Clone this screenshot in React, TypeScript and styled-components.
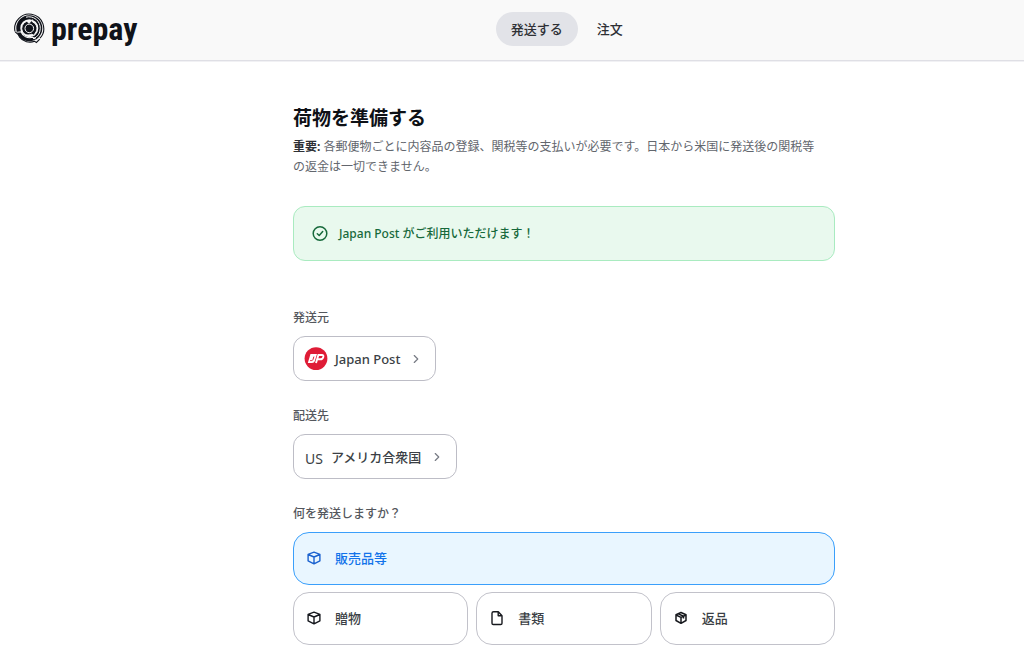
import React, { useState } from "react";
import styled, { createGlobalStyle } from "styled-components";
import { ChevronRight } from "lucide-react";

const GlobalStyle = createGlobalStyle`
  *, *::before, *::after { box-sizing: border-box; }
  body {
    margin: 0;
    background: #ffffff;
    color: #3b3f45;
    font-family: "Noto Sans", "Noto Sans CJK JP", sans-serif;
    font-size: 13px;
    line-height: 20px;
  }
  h1, p { margin: 0; }
`;

const Header = styled.header`
  display: flex;
  align-items: center;
  height: 61px;
  padding: 0 28px 3px 14px;
  background: #f9f9f9;
  border-bottom: 1px solid #dfdfe5;
  box-shadow: 0 1px 0 #f1f1f4;
`;

const Brand = styled.a`
  display: flex;
  align-items: center;
  gap: 6px;
  color: #10131a;
  text-decoration: none;
`;

const BrandName = styled.span`
  font-family: "Roboto Condensed", "Roboto", sans-serif;
  font-size: 32px;
  font-weight: 700;
  line-height: 36px;
`;

const Nav = styled.nav`
  display: flex;
  flex: 1;
  justify-content: center;
  gap: 4px;
`;

const NavLink = styled.a<{ $active?: boolean }>`
  padding: 7px 15px;
  border-radius: 17px;
  background: ${(p) => (p.$active ? "#e2e3e8" : "transparent")};
  color: #2e3035;
  font-weight: 500;
  text-decoration: none;
`;

const Main = styled.main`
  padding: 43px 0 0 104px;
`;

const Content = styled.div`
  width: 100%;
  max-width: 542px;
  margin: 0 auto;
`;

const Title = styled.h1`
  color: #0e1116;
  font-size: 19px;
  font-weight: 700;
  line-height: 28px;
`;

const Description = styled.p`
  margin-top: 5px;
  padding-right: 12px;
  color: #62666d;
  font-size: 12px;

  strong {
    color: #2e3035;
    font-weight: 700;
  }
`;

const Notice = styled.div`
  display: flex;
  align-items: center;
  gap: 10px;
  height: 55px;
  margin-top: 29px;
  padding: 0 17px;
  border: 1px solid #a9ebc0;
  border-radius: 12px;
  background: #e9f9ee;
  color: #17693b;
  font-size: 12px;
  font-weight: 500;
`;

const Fields = styled.div`
  display: flex;
  flex-direction: column;
  gap: 25px;
  margin-top: 47px;
`;

const Field = styled.div`
  display: flex;
  flex-direction: column;
  align-items: flex-start;
  gap: 8px;
`;

const FieldLabel = styled.span`
  color: #54575d;
  font-size: 12px;
  font-weight: 500;
`;

const PickerButton = styled.button`
  display: flex;
  align-items: center;
  gap: 7px;
  height: 45px;
  padding: 0 12px 0 10px;
  border: 1px solid #bdbdc6;
  border-radius: 12px;
  background: #ffffff;
  color: #3b3f45;
  font: inherit;
  font-weight: 500;
  cursor: pointer;

  .lucide {
    margin-left: 2px;
    color: #777b84;
  }
`;

const CountryCode = styled.span`
  padding: 4px 1px 0;
  font-size: 14px;
  font-weight: 400;
`;

const OptionGrid = styled.div`
  display: grid;
  grid-template-columns: repeat(3, 1fr);
  gap: 7px 8px;
  width: 100%;
`;

const OptionCard = styled.label<{ $selected: boolean; $wide?: boolean }>`
  display: flex;
  align-items: center;
  grid-column: ${(p) => (p.$wide ? "1 / -1" : "auto")};
  height: 53px;
  padding: 0 12px 1px;
  border: 1px solid ${(p) => (p.$selected ? "#3a9ffb" : "#c2c2ca")};
  border-radius: 16px;
  background: ${(p) => (p.$selected ? "#e9f6ff" : "#ffffff")};
  color: ${(p) => (p.$selected ? "#1273ea" : "#3b3f45")};
  font-weight: 500;
  cursor: pointer;

  &:focus-within {
    outline: 2px solid #3a9ffb;
  }

  svg {
    flex: none;
    margin-right: 13px;
    color: ${(p) => (p.$selected ? "#1b62cf" : "#16181d")};
  }
`;

const HiddenRadio = styled.input`
  appearance: none;
  width: 0;
  height: 0;
  margin: 0;
  outline: none;
`;

const BrandMark = () => (
  <svg width="31" height="31" viewBox="0 0 31 31" fill="none" aria-hidden="true">
    <path d="M1 18.500A14.500 14.500 0 0 1 17.500 1.200A14.500 14.500 0 0 1 26 25.200" stroke="#10131a" strokeWidth="1.100" />
    <path d="M1.200 18.800L4.300 21.600L5.600 24.200C9 28.800 15.500 30.200 20.600 28.300L22.400 29.500L25.800 26.200" stroke="#10131a" strokeWidth="1.100" />
    <circle cx="15.300" cy="15.200" r="11" stroke="#10131a" strokeWidth="4" />
    <path d="M12 4.200A11.300 11.300 0 0 1 26.300 15.500A11.300 11.300 0 0 1 19 25.800" stroke="#f9f9f9" strokeWidth="1" />
    <path d="M3.200 19.300L7 18.800C8.800 23.600 13.500 25.600 18.800 24.300L21.500 26" stroke="#f9f9f9" strokeWidth="1.100" />
    <path d="M8.600 19A7.600 7.600 0 0 1 12.800 8.200L15 10.200L18.600 6.800V9C23.600 11.200 24.200 17 21 20.400L20.400 22.400L17.600 21.300C14 22.800 10.800 21.800 8.600 19Z" fill="#10131a" stroke="#f9f9f9" strokeWidth="1" />
    <circle cx="15.300" cy="15.400" r="4.300" stroke="#f9f9f9" strokeWidth="1" />
    <circle cx="15.300" cy="15.400" r="2.200" fill="#10131a" />
  </svg>
);

const CheckCircle = () => (
  <svg width="18" height="18" viewBox="0 0 18 18" fill="none" stroke="currentColor" strokeLinecap="round" strokeLinejoin="round" aria-hidden="true">
    <circle cx="9" cy="8.500" r="6.800" strokeWidth="1.500" />
    <path d="M6.300 8.800L8.200 10.500L11.700 6.500" strokeWidth="1.500" />
  </svg>
);

const JapanPostMark = () => (
  <svg width="24" height="24" viewBox="0 0 24 24" aria-hidden="true">
    <circle cx="12" cy="11.600" r="11.400" fill="#df1c36" />
    <path d="M6.500 7H13L10.900 13.800C10.400 15.400 9.500 16 8 16H3.800Z" fill="#ffffff" />
    <path d="M9.900 9.600L9 12.500Q8.600 13.600 7.400 13.600H6.200" stroke="#df1c36" strokeWidth="1" fill="none" />
    <path d="M12 16L14.400 8H18Q19.800 8 19.300 9.900Q18.700 12.300 16.300 12.300H13.600" stroke="#ffffff" strokeWidth="1.900" fill="none" />
  </svg>
);

const BoxIcon = () => (
  <svg width="16" height="16" viewBox="0 0 16 16" fill="none" stroke="currentColor" strokeWidth="1.400" strokeLinecap="round" strokeLinejoin="round" aria-hidden="true">
    <path d="M8 2.100L13.900 4.300V10.900L8 13.900L2.100 10.900V4.300ZM2.100 4.500L8 7L13.900 4.500M8 7V13.700" />
  </svg>
);

const DocumentIcon = () => (
  <svg width="16" height="16" viewBox="0 0 16 16" fill="none" stroke="currentColor" strokeWidth="1.400" strokeLinejoin="round" aria-hidden="true">
    <path d="M4.600 1.700H9.300L13 5.700V13.200Q13 14.500 11.700 14.500H4.300Q3 14.500 3 13.200V3.200Q3 1.700 4.600 1.700Z" />
    <path d="M9.200 2V5.800H12.800" />
  </svg>
);

const ReturnBoxIcon = () => (
  <svg width="16" height="16" viewBox="0 0 16 16" fill="none" stroke="currentColor" strokeWidth="1.500" strokeLinejoin="round" aria-hidden="true">
    <path d="M8 2.500L13 4.800V10.500L8 13.300L3 10.500V4.800ZM3 5L8 7.400L13 5M8 7.400V13.200M5.500 3.900L10.500 6.300V8.500" />
  </svg>
);

const options = [
  { id: "merchandise", label: "販売品等", Icon: BoxIcon, wide: true },
  { id: "gift", label: "贈物", Icon: BoxIcon },
  { id: "documents", label: "書類", Icon: DocumentIcon },
  { id: "returns", label: "返品", Icon: ReturnBoxIcon },
];

export default function App() {
  const [selected, setSelected] = useState("merchandise");

  return (
    <>
      <GlobalStyle />
      <Header>
        <Brand href="#">
          <BrandMark />
          <BrandName>prepay</BrandName>
        </Brand>
        <Nav>
          <NavLink href="#send" $active aria-current="page">発送する</NavLink>
          <NavLink href="#orders">注文</NavLink>
        </Nav>
      </Header>
      <Main lang="ja">
        <Content>
          <Title>荷物を準備する</Title>
          <Description>
            <strong>重要:</strong> 各郵便物ごとに内容品の登録、関税等の支払いが必要です。日本から米国に発送後の関税等の返金は一切できません。
          </Description>
          <Notice role="status">
            <CheckCircle />
            <span>Japan Post がご利用いただけます！</span>
          </Notice>
          <Fields>
            <Field>
              <FieldLabel id="origin-label">発送元</FieldLabel>
              <PickerButton type="button" aria-labelledby="origin-label origin-value">
                <JapanPostMark />
                <span id="origin-value">Japan Post</span>
                <ChevronRight size={14} />
              </PickerButton>
            </Field>
            <Field>
              <FieldLabel id="destination-label">配送先</FieldLabel>
              <PickerButton type="button" aria-labelledby="destination-label destination-value">
                <CountryCode>US</CountryCode>
                <span id="destination-value">アメリカ合衆国</span>
                <ChevronRight size={14} />
              </PickerButton>
            </Field>
            <Field>
              <FieldLabel id="contents-label">何を発送しますか？</FieldLabel>
              <OptionGrid role="radiogroup" aria-labelledby="contents-label">
                {options.map(({ id, label, Icon, wide }) => (
                  <OptionCard key={id} $selected={selected === id} $wide={wide}>
                    <HiddenRadio
                      type="radio"
                      name="contents"
                      value={id}
                      checked={selected === id}
                      onChange={() => setSelected(id)}
                    />
                    <Icon />
                    {label}
                  </OptionCard>
                ))}
              </OptionGrid>
            </Field>
          </Fields>
        </Content>
      </Main>
    </>
  );
}
